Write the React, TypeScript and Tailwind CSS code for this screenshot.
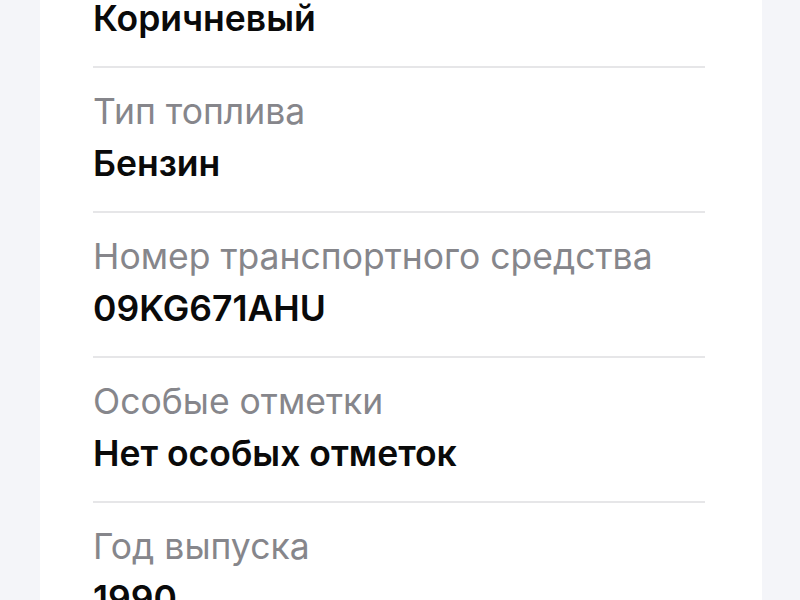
import React from 'react';

type Field = { label: string; value: string };

const FIELDS: Field[] = [
    { label: 'Цвет', value: 'Коричневый' },
    { label: 'Тип топлива', value: 'Бензин' },
    { label: 'Номер транспортного средства', value: '09KG671AHU' },
    { label: 'Особые отметки', value: 'Нет особых отметок' },
    { label: 'Год выпуска', value: '1990' },
];

const FieldRow: React.FC<{ field: Field; last: boolean }> = ({ field, last }) => (
    <div className={last ? 'pt-[24px] pb-[27px]' : 'pt-[24px] pb-[27px] border-b-2 border-[#e6e6e8]'}>
        <div className="text-[35.5px] leading-[40px] text-[#86868b]">{field.label}</div>
        <div className="mt-[12px] text-[35.5px] leading-[40px] font-semibold text-[#0a0a0a]">{field.value}</div>
    </div>
);

export default function App() {
    return (
        <div className="h-[600px] w-[800px] overflow-hidden bg-[#f4f5f9] px-[40px] font-['Inter','Roboto',sans-serif]">
            <div className="flex h-full w-[722px] flex-col bg-white pl-[53px] pr-[57px]">
                <div className="-mt-[77px]">
                    {FIELDS.map((f, i) => (
                        <FieldRow key={f.label} field={f} last={i === FIELDS.length - 1} />
                    ))}
                </div>
            </div>
        </div>
    );
}
